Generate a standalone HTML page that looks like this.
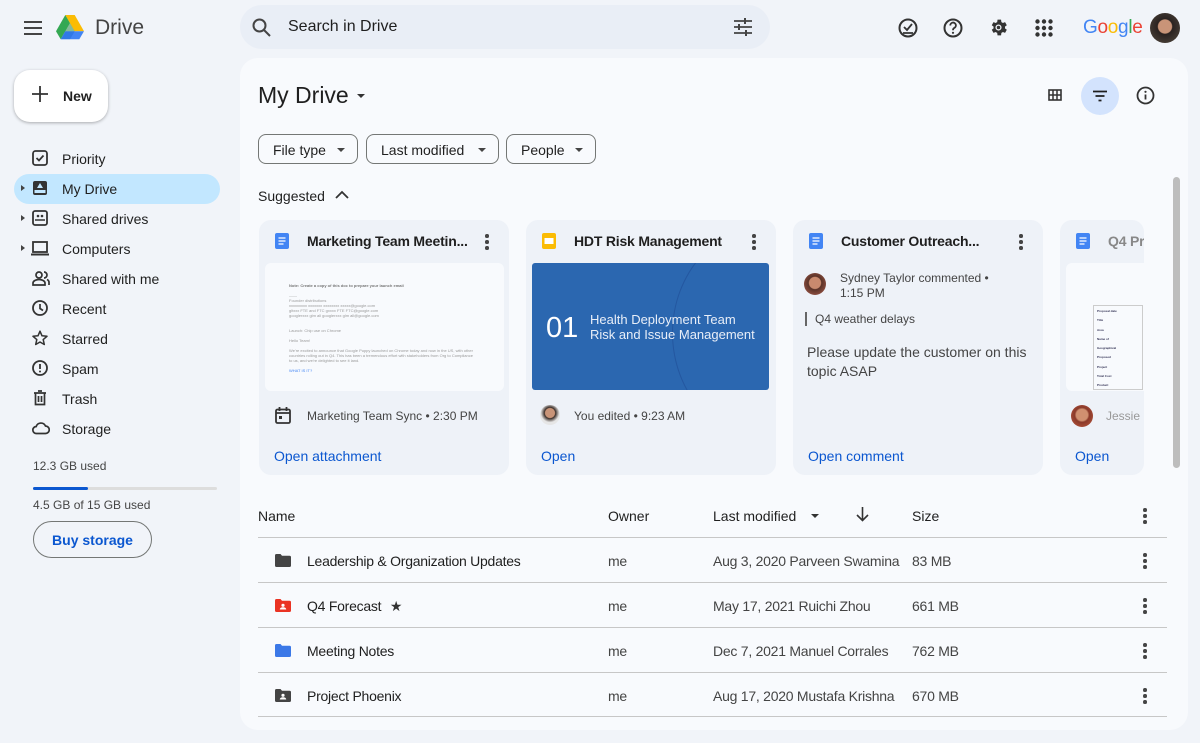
<!DOCTYPE html>
<html><head><meta charset="utf-8"><style>
*{box-sizing:border-box;margin:0;padding:0}
body{width:1200px;height:743px;overflow:hidden;background:#f1f4f9;font-family:"Liberation Sans",Arial,sans-serif;color:#1f1f1f;position:relative}
.a{position:absolute}
svg{display:block}
.nav{position:absolute;left:14px;width:206px;height:30px;border-radius:15px;font-size:14px;color:#1f1f1f}
.nav span{position:absolute;left:48px;top:7px}
.nav svg{position:absolute;left:18px;top:6px}
.nav .tri{position:absolute;left:7px;top:11px;width:0;height:0;border-left:4px solid #444;border-top:3.5px solid transparent;border-bottom:3.5px solid transparent}
.chip{position:absolute;top:134px;height:30px;border:1px solid #747775;border-radius:8px;font-size:14px;padding:7px 0 0 14px;color:#1f1f1f}
.chip:after{content:"";position:absolute;right:12px;top:13px;border-top:4px solid #444;border-left:4px solid transparent;border-right:4px solid transparent}
.card{position:absolute;top:220px;width:250px;height:255px;background:#eef2f8;border-radius:12px;overflow:hidden}
.ct{position:absolute;left:48px;top:13px;font-size:14px;font-weight:bold;color:#1f1f1f;white-space:nowrap;letter-spacing:-.2px}
.dots{position:absolute;width:4px}
.dots i{display:block;width:3.5px;height:3.5px;border-radius:50%;background:#444;margin-bottom:2.5px}
.link{position:absolute;left:15px;top:228px;font-size:14px;color:#0b57d0}
.row{position:absolute;left:258px;width:909px;height:45px;border-top:1px solid #c7c7c7;font-size:14px;color:#444;letter-spacing:-.25px}
.row div{position:absolute;top:15px}
.hd{position:absolute;top:508px;font-size:14px;color:#1f1f1f}
</style></head><body>
<div class="a" style="left:23px;top:20px"><svg width="20" height="16"><path d="M1 2h18M1 8h18M1 14h18" stroke="#444" stroke-width="2"/></svg></div>
<div class="a" style="left:56px;top:15px"><svg width="28" height="25" viewBox="0 0 28 25"><path d="M9.3 0h9.4l9.3 16.2h-9.4z" fill="#fbbc04"/><path d="M9.3 0L0 16.2l4.7 8.1L14 8.1z" fill="#34a853"/><path d="M4.7 24.3h18.6l4.7-8.1H9.3z" fill="#4285f4"/><path d="M4.7 24.3L9.3 16.2h9.4L14 24.3z" fill="#1967d2" opacity=".4"/><path d="M14 8.1l4.7 8.1H9.3z" fill="#188038" opacity=".5"/></svg></div>
<div class="a" style="left:95px;top:16px;font-size:21px;color:#444">Drive</div>
<div class="a" style="left:240px;top:5px;width:530px;height:44px;background:#e9eef6;border-radius:22px"></div>
<div class="a" style="left:252px;top:18px"><svg width="19" height="19"><circle cx="7.5" cy="7.5" r="6" fill="none" stroke="#444" stroke-width="2"/><path d="M12 12l6 6" stroke="#444" stroke-width="2"/></svg></div>
<div class="a" style="left:288px;top:18px;font-size:16px;color:#1f1f1f">Search in Drive</div>
<div class="a" style="left:733px;top:18px"><svg width="20" height="18"><path d="M1 3h18M1 9h18M1 15h18" stroke="#444" stroke-width="1.8"/><rect x="11" y="0" width="2" height="6" fill="#444"/><rect x="5" y="6" width="2" height="6" fill="#444"/><rect x="12" y="12" width="2" height="6" fill="#444"/></svg></div>
<div class="a" style="left:898px;top:18px"><svg width="20" height="20"><circle cx="10" cy="10" r="8.5" fill="none" stroke="#333" stroke-width="2"/><path d="M6 9l3 3 5-6M5 15h10" stroke="#333" stroke-width="1.8" fill="none"/></svg></div>
<div class="a" style="left:943px;top:18px"><svg width="20" height="20"><circle cx="10" cy="10" r="8.5" fill="none" stroke="#333" stroke-width="2"/><path d="M7.3 7.5a2.8 2.8 0 1 1 4 2.4c-1 .6-1.3 1-1.3 2.3" stroke="#333" stroke-width="1.8" fill="none"/><circle cx="10" cy="14.8" r="1.1" fill="#333"/></svg></div>
<div class="a" style="left:988px;top:17px"><svg width="21" height="21" viewBox="0 0 24 24"><path fill="#333" d="M19.4 13a7.5 7.5 0 0 0 0-2l2.1-1.6-2-3.5-2.5 1a7.3 7.3 0 0 0-1.7-1L14.9 3h-4l-.4 2.9a7.3 7.3 0 0 0-1.7 1l-2.5-1-2 3.5L6.4 11a7.5 7.5 0 0 0 0 2l-2.1 1.6 2 3.5 2.5-1a7.3 7.3 0 0 0 1.7 1l.4 2.9h4l.4-2.9a7.3 7.3 0 0 0 1.7-1l2.5 1 2-3.5zM12 15.5a3.5 3.5 0 1 1 0-7 3.5 3.5 0 0 1 0 7z"/><circle cx="12" cy="12" r="2" fill="#333"/></svg></div>
<div class="a" style="left:1035px;top:19px"><svg width="18" height="18"><g fill="#333"><circle cx="2.5" cy="2.5" r="2.2"/><circle cx="9" cy="2.5" r="2.2"/><circle cx="15.5" cy="2.5" r="2.2"/><circle cx="2.5" cy="9" r="2.2"/><circle cx="9" cy="9" r="2.2"/><circle cx="15.5" cy="9" r="2.2"/><circle cx="2.5" cy="15.5" r="2.2"/><circle cx="9" cy="15.5" r="2.2"/><circle cx="15.5" cy="15.5" r="2.2"/></g></svg></div>
<div class="a" style="left:1083px;top:17px;font-size:19px;letter-spacing:-.3px"><span style="color:#4285f4">G</span><span style="color:#ea4335">o</span><span style="color:#fbbc04">o</span><span style="color:#4285f4">g</span><span style="color:#34a853">l</span><span style="color:#ea4335">e</span></div>
<div class="a" style="left:1150px;top:13px;width:30px;height:30px;border-radius:50%;background:radial-gradient(circle at 50% 45%,#c99478 0 30%,#2a2220 34%,#544a40 100%)"></div>
<div class="a" style="left:14px;top:70px;width:94px;height:52px;background:#fff;border-radius:16px;box-shadow:0 1px 3px rgba(0,0,0,.3)"></div>
<div class="a" style="left:32px;top:86px"><svg width="16" height="16"><path d="M8 0v16M0 8h16" stroke="#333" stroke-width="1.8"/></svg></div>
<div class="a" style="left:63px;top:88px;font-size:14px;font-weight:bold;color:#1f1f1f">New</div>
<div class="nav" style="top:144px"><svg width="16" height="16"><rect x="1" y="1" width="14" height="14" rx="2.5" fill="none" stroke="#333" stroke-width="1.8"/><path d="M4.5 8l2.5 2.5 4.5-5" stroke="#333" stroke-width="1.8" fill="none"/></svg><span>Priority</span></div>
<div class="nav" style="top:174px;background:#c2e7ff"><i class="tri"></i><svg width="16" height="16"><rect x="1" y="1" width="14" height="14" rx="2" fill="#333"/><rect x="2.5" y="10" width="11" height="3" fill="#c2e7ff"/><path d="M8 3l3 5H5z" fill="#c2e7ff"/></svg><span>My Drive</span></div>
<div class="nav" style="top:204px"><i class="tri"></i><svg width="16" height="16"><rect x="1" y="1" width="14" height="14" rx="2" fill="none" stroke="#333" stroke-width="1.8"/><path d="M3 10h10" stroke="#333" stroke-width="1.5"/><circle cx="6" cy="6" r="1.3" fill="#333"/><circle cx="10" cy="6" r="1.3" fill="#333"/></svg><span>Shared drives</span></div>
<div class="nav" style="top:234px"><i class="tri"></i><svg width="18" height="16" style="left:17px"><rect x="2" y="2" width="14" height="10" fill="none" stroke="#333" stroke-width="1.8"/><path d="M0 14.5h18" stroke="#333" stroke-width="2"/></svg><span>Computers</span></div>
<div class="nav" style="top:264px"><svg width="18" height="16"><circle cx="7" cy="5" r="3" fill="none" stroke="#333" stroke-width="1.7"/><path d="M1 15v-2c0-2 3-3.5 6-3.5s6 1.5 6 3.5v2zM12 2a3 3 0 0 1 0 6M15 9.5c1.5.6 2 1.5 2 3V15" fill="none" stroke="#333" stroke-width="1.7"/></svg><span>Shared with me</span></div>
<div class="nav" style="top:294px"><svg width="16" height="16"><circle cx="8" cy="8" r="7" fill="none" stroke="#333" stroke-width="1.8"/><path d="M8 4v4.5l3 2" stroke="#333" stroke-width="1.7" fill="none"/></svg><span>Recent</span></div>
<div class="nav" style="top:324px"><svg width="16" height="16"><path d="M8 1.2l2 4.6 5 .5-3.8 3.3 1.1 4.9L8 12l-4.3 2.5 1.1-4.9L1 6.3l5-.5z" fill="none" stroke="#333" stroke-width="1.5" stroke-linejoin="round"/></svg><span>Starred</span></div>
<div class="nav" style="top:354px"><svg width="16" height="16"><circle cx="8" cy="8" r="7" fill="none" stroke="#333" stroke-width="1.8"/><path d="M8 4v5" stroke="#333" stroke-width="1.8"/><circle cx="8" cy="11.5" r="1" fill="#333"/></svg><span>Spam</span></div>
<div class="nav" style="top:384px"><svg width="16" height="16"><path d="M2 3h12M6 1h4" stroke="#333" stroke-width="1.7"/><path d="M3.5 3.5v11h9v-11M6.5 6v6M9.5 6v6" fill="none" stroke="#333" stroke-width="1.7"/></svg><span>Trash</span></div>
<div class="nav" style="top:414px"><svg width="18" height="16"><path d="M4.5 13.5a3.5 3.5 0 0 1-.3-7A5 5 0 0 1 13.5 6a3.7 3.7 0 0 1 0 7.5z" fill="none" stroke="#333" stroke-width="1.7"/></svg><span>Storage</span></div>
<div class="a" style="left:33px;top:459px;font-size:12px;color:#444">12.3 GB used</div>
<div class="a" style="left:33px;top:487px;width:184px;height:3px;background:#ddd;border-radius:2px"><div style="width:55px;height:3px;background:#0b57d0;border-radius:2px"></div></div>
<div class="a" style="left:33px;top:498px;font-size:12px;color:#444">4.5 GB of 15 GB used</div>
<div class="a" style="left:33px;top:521px;width:119px;height:37px;border:1px solid #747775;border-radius:19px;font-size:14px;font-weight:bold;color:#0b57d0;text-align:center;padding-top:10px">Buy storage</div>
<div class="a" style="left:240px;top:58px;width:948px;height:672px;background:#f8fafd;border-radius:18px"></div>
<div class="a" style="left:258px;top:82px;font-size:23px;color:#1f1f1f">My Drive</div>
<div class="a" style="left:357px;top:94px;border-top:4px solid #333;border-left:4px solid transparent;border-right:4px solid transparent"></div>
<div class="a" style="left:1048px;top:89px"><svg width="14" height="12"><rect x="1" y="1" width="12" height="10" fill="none" stroke="#333" stroke-width="1.6"/><path d="M5 1v10M9 1v10M1 6h12" stroke="#333" stroke-width="1.5"/></svg></div>
<div class="a" style="left:1081px;top:77px;width:38px;height:38px;border-radius:50%;background:#d3e3fd"></div>
<div class="a" style="left:1092px;top:90px"><svg width="16" height="12"><path d="M1 1.5h14M3.5 6h9M6.5 10.5h3" stroke="#1f1f1f" stroke-width="1.8"/></svg></div>
<div class="a" style="left:1136px;top:86px"><svg width="19" height="19"><circle cx="9.5" cy="9.5" r="8" fill="none" stroke="#333" stroke-width="1.8"/><path d="M9.5 8.5v5" stroke="#333" stroke-width="1.8"/><circle cx="9.5" cy="5.8" r="1.1" fill="#333"/></svg></div>
<div class="chip" style="left:258px;width:100px">File type</div>
<div class="chip" style="left:366px;width:133px">Last modified</div>
<div class="chip" style="left:506px;width:90px">People</div>
<div class="a" style="left:258px;top:188px;font-size:14px;color:#1f1f1f">Suggested</div>
<div class="a" style="left:335px;top:190px"><svg width="14" height="9"><path d="M1 8l6-6 6 6" fill="none" stroke="#333" stroke-width="1.8"/></svg></div>
<div class="a" style="left:1173px;top:177px;width:7px;height:291px;background:#bdbdbd;border-radius:4px"></div>
<div class="card" style="left:259px">
<svg class="a" style="left:16px;top:13px" width="14" height="16"><rect width="14" height="16" rx="2" fill="#4285f4"/><path d="M3.5 5h7M3.5 8h7M3.5 11h5" stroke="#fff" stroke-width="1.3"/></svg>
<div class="ct">Marketing Team Meetin...</div>
<div class="dots" style="left:226px;top:14px"><i></i><i></i><i></i></div>
<div class="a" style="left:6px;top:43px;width:239px;height:128px;background:#f8fafd;border-radius:6px;font-size:4px;color:#999;padding:20px 0 0 24px;line-height:5px">
<b style="color:#777">Note: Create a copy of this doc to prepare your launch email</b><br><br>——<br>Founder distributions<br>xxxxxxxxx xxxxxxx xxxxxxxx xxxxx@google.com<br>gltxxx FTE and FTC gxxxx FTE FTC@google.com<br>googlerxxx glm all googlerxxx glm all@google.com<br><br><br>Launch: Chip use on Chrome<br><br>Hello Team!<br><br>We're excited to announce that Google Puppy launched on Chrome today and now in the US, with other<br>countries rolling out in Q4. This has been a tremendous effort with stakeholders from Org to Compliance<br>to us, and we're delighted to see it land.<br><br><span style="color:#4285f4">WHAT IS IT?</span></div>
<svg class="a" style="left:16px;top:187px" width="16" height="17"><rect x="1" y="2.5" width="14" height="13.5" rx="1.5" fill="none" stroke="#333" stroke-width="1.8"/><path d="M1 6h14M4.5 0v4M11.5 0v4" stroke="#333" stroke-width="1.8"/><rect x="4" y="9" width="3" height="3" fill="#333"/></svg>
<div class="a" style="left:48px;top:189px;font-size:12px;color:#444">Marketing Team Sync • 2:30 PM</div>
<div class="link">Open attachment</div>
</div>
<div class="card" style="left:526px">
<svg class="a" style="left:16px;top:13px" width="14" height="16"><rect width="14" height="16" rx="2" fill="#fbbc04"/><rect x="2.5" y="5" width="9" height="6" fill="#fff"/></svg>
<div class="ct">HDT Risk Management</div>
<div class="dots" style="left:226px;top:14px"><i></i><i></i><i></i></div>
<div class="a" style="left:6px;top:43px;width:237px;height:127px;background:#2b67b0;border-radius:3px;overflow:hidden">
<div class="a" style="left:140px;top:-40px;width:200px;height:220px;border:1px solid #2457a0;border-radius:50%"></div>
<div class="a" style="left:14px;top:49px;font-size:29px;color:#fff">01</div>
<div class="a" style="left:58px;top:49px;font-size:13px;color:#e8eef8;line-height:15px">Health Deployment Team<br>Risk and Issue Management</div></div>
<div class="a" style="left:14px;top:185px;width:20px;height:20px;border-radius:50%;background:radial-gradient(circle at 50% 40%,#c89478 0 30%,#3a2e28 35%,#e6e6e6 60%)"></div>
<div class="a" style="left:48px;top:189px;font-size:12px;color:#444">You edited • 9:23 AM</div>
<div class="link">Open</div>
</div>
<div class="card" style="left:793px">
<svg class="a" style="left:16px;top:13px" width="14" height="16"><rect width="14" height="16" rx="2" fill="#4285f4"/><path d="M3.5 5h7M3.5 8h7M3.5 11h5" stroke="#fff" stroke-width="1.3"/></svg>
<div class="ct">Customer Outreach...</div>
<div class="dots" style="left:226px;top:14px"><i></i><i></i><i></i></div>
<div class="a" style="left:11px;top:53px;width:22px;height:22px;border-radius:50%;background:radial-gradient(circle at 50% 45%,#c98a6e 0 35%,#5a3328 40%,#b06050 100%)"></div>
<div class="a" style="left:47px;top:51px;font-size:12px;color:#444;line-height:15px">Sydney Taylor commented •<br>1:15 PM</div>
<div class="a" style="left:12px;top:92px;width:2px;height:14px;background:#666"></div>
<div class="a" style="left:22px;top:92px;font-size:12px;color:#444">Q4 weather delays</div>
<div class="a" style="left:14px;top:123px;font-size:14px;color:#444;line-height:19px">Please update the customer on this<br>topic ASAP</div>
<div class="link">Open comment</div>
</div>
<div class="card" style="left:1060px;width:84px">
<svg class="a" style="left:16px;top:13px" width="14" height="16"><rect width="14" height="16" rx="2" fill="#4285f4"/><path d="M3.5 5h7M3.5 8h7M3.5 11h5" stroke="#fff" stroke-width="1.3"/></svg>
<div class="ct" style="color:#888">Q4 Pr</div>
<div class="a" style="left:6px;top:43px;width:90px;height:128px;background:#f8fafd;border-radius:6px"></div>
<div class="a" style="left:33px;top:85px;width:50px;height:85px;border:1px solid #ccc;font-size:3px;color:#335;line-height:9.3px;padding:1px 3px;font-weight:bold">Proposal date<br>Title<br>Area<br>Name of<br>Geographical<br>Proposed<br>Project<br>Total Cost<br>Product</div>
<div class="a" style="left:11px;top:185px;width:22px;height:22px;border-radius:50%;background:radial-gradient(circle at 50% 45%,#d09070 0 35%,#8a3a2a 45%,#c05a40 100%)"></div>
<div class="a" style="left:46px;top:189px;font-size:12px;color:#999">Jessie</div>
<div class="link">Open</div>
</div>
<div class="hd" style="left:258px">Name</div>
<div class="hd" style="left:608px">Owner</div>
<div class="hd" style="left:713px">Last modified</div>
<div class="a" style="left:811px;top:514px;border-top:4px solid #333;border-left:4px solid transparent;border-right:4px solid transparent"></div>
<div class="a" style="left:856px;top:507px"><svg width="13" height="15"><path d="M6.5 0v13M1 8l5.5 5.5L12 8" fill="none" stroke="#333" stroke-width="1.6"/></svg></div>
<div class="hd" style="left:912px">Size</div>
<div class="dots" style="left:1143px;top:508px"><i></i><i></i><i></i></div>
<div class="row" style="top:537px"><svg class="a" style="left:17px;top:16px" width="16" height="13"><path d="M0 1.5a1.5 1.5 0 0 1 1.5-1.5h4l1.5 1.8h7.5A1.5 1.5 0 0 1 16 3.3V11.5a1.5 1.5 0 0 1-1.5 1.5h-13A1.5 1.5 0 0 1 0 11.5z" fill="#444"/></svg><div style="left:49px;color:#1f1f1f">Leadership &amp; Organization Updates</div><div style="left:350px">me</div><div style="left:455px">Aug 3, 2020 Parveen Swamina</div><div style="left:654px">83 MB</div></div>
<div class="row" style="top:582px"><svg class="a" style="left:17px;top:16px" width="16" height="13"><path d="M0 1.5a1.5 1.5 0 0 1 1.5-1.5h4l1.5 1.8h7.5A1.5 1.5 0 0 1 16 3.3V11.5a1.5 1.5 0 0 1-1.5 1.5h-13A1.5 1.5 0 0 1 0 11.5z" fill="#ea3323"/><circle cx="8" cy="6.3" r="1.6" fill="#fff"/><path d="M4.8 10.5c0-1.5 1.5-2.2 3.2-2.2s3.2.7 3.2 2.2z" fill="#fff"/></svg><div style="left:49px;color:#1f1f1f">Q4 Forecast <span style="margin-left:5px;color:#333">★</span></div><div style="left:350px">me</div><div style="left:455px">May 17, 2021 Ruichi Zhou</div><div style="left:654px">661 MB</div></div>
<div class="row" style="top:627px"><svg class="a" style="left:17px;top:16px" width="16" height="13"><path d="M0 1.5a1.5 1.5 0 0 1 1.5-1.5h4l1.5 1.8h7.5A1.5 1.5 0 0 1 16 3.3V11.5a1.5 1.5 0 0 1-1.5 1.5h-13A1.5 1.5 0 0 1 0 11.5z" fill="#3b78e7"/></svg><div style="left:49px;color:#1f1f1f">Meeting Notes</div><div style="left:350px">me</div><div style="left:455px">Dec 7, 2021 Manuel Corrales</div><div style="left:654px">762 MB</div></div>
<div class="row" style="top:672px;border-bottom:1px solid #c7c7c7"><svg class="a" style="left:17px;top:16px" width="16" height="13"><path d="M0 1.5a1.5 1.5 0 0 1 1.5-1.5h4l1.5 1.8h7.5A1.5 1.5 0 0 1 16 3.3V11.5a1.5 1.5 0 0 1-1.5 1.5h-13A1.5 1.5 0 0 1 0 11.5z" fill="#444"/><circle cx="8" cy="6.3" r="1.6" fill="#fff"/><path d="M4.8 10.5c0-1.5 1.5-2.2 3.2-2.2s3.2.7 3.2 2.2z" fill="#fff"/></svg><div style="left:49px;color:#1f1f1f">Project Phoenix</div><div style="left:350px">me</div><div style="left:455px">Aug 17, 2020 Mustafa Krishna</div><div style="left:654px">670 MB</div></div>
<div class="dots" style="left:1143px;top:553px"><i></i><i></i><i></i></div>
<div class="dots" style="left:1143px;top:598px"><i></i><i></i><i></i></div>
<div class="dots" style="left:1143px;top:643px"><i></i><i></i><i></i></div>
<div class="dots" style="left:1143px;top:688px"><i></i><i></i><i></i></div>
</body></html>
